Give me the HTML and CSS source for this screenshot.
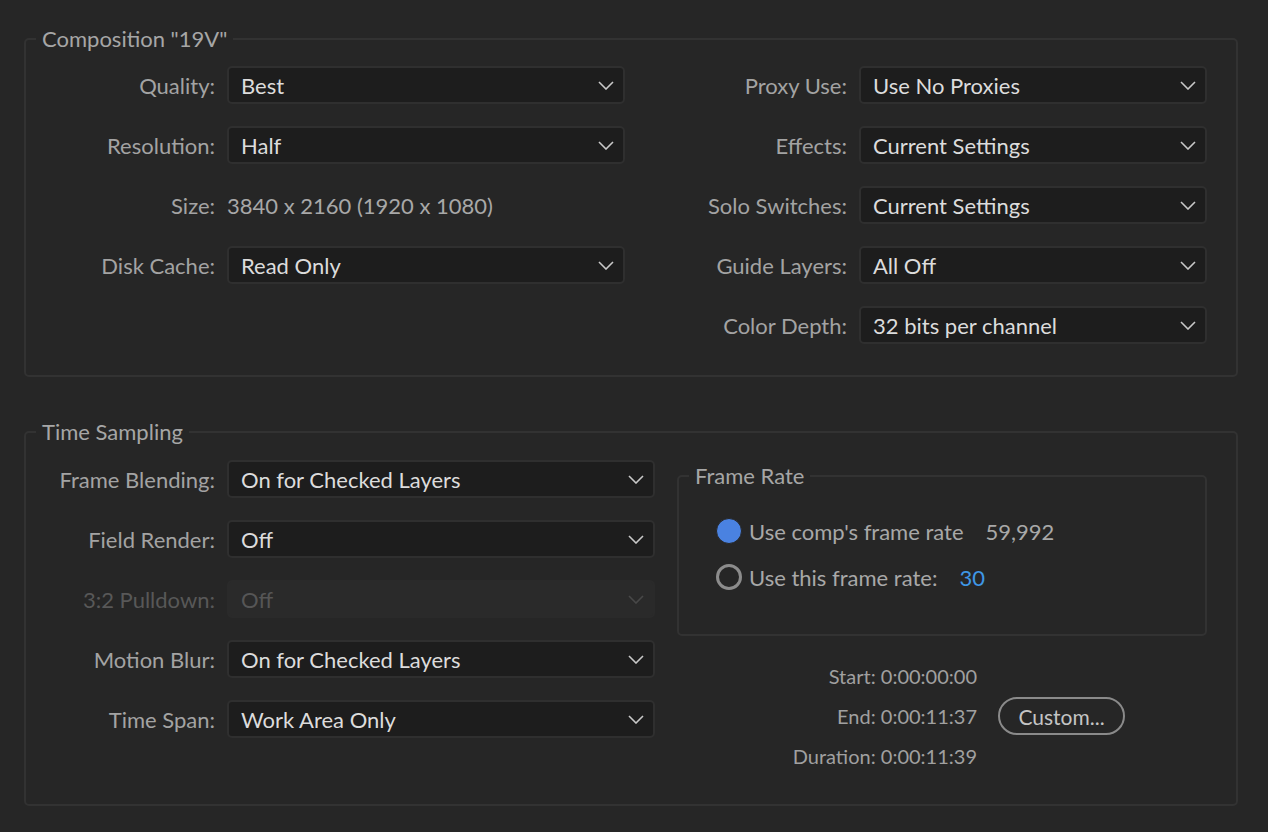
FILE: index.html
```html
<!DOCTYPE html>
<html>
<head>
<meta charset="utf-8">
<link rel="stylesheet" href="styles.css">
</head>
<body>
<div class="page">
  <section class="group comp">
    <div class="group-title">Composition "19V"</div>
    <div class="comp-body">
      <div class="grid grid-left">
        <div class="label">Quality:</div>
        <div class="dd"><span>Best</span><svg class="chev" viewBox="0 0 16 9"><path d="M1 1l7 7 7-7"/></svg></div>
        <div class="label">Resolution:</div>
        <div class="dd"><span>Half</span><svg class="chev" viewBox="0 0 16 9"><path d="M1 1l7 7 7-7"/></svg></div>
        <div class="label">Size:</div>
        <div class="plain">3840 x 2160 (1920 x 1080)</div>
        <div class="label">Disk Cache:</div>
        <div class="dd"><span>Read Only</span><svg class="chev" viewBox="0 0 16 9"><path d="M1 1l7 7 7-7"/></svg></div>
      </div>
      <div class="grid grid-right">
        <div class="label">Proxy Use:</div>
        <div class="dd"><span>Use No Proxies</span><svg class="chev" viewBox="0 0 16 9"><path d="M1 1l7 7 7-7"/></svg></div>
        <div class="label">Effects:</div>
        <div class="dd"><span>Current Settings</span><svg class="chev" viewBox="0 0 16 9"><path d="M1 1l7 7 7-7"/></svg></div>
        <div class="label">Solo Switches:</div>
        <div class="dd"><span>Current Settings</span><svg class="chev" viewBox="0 0 16 9"><path d="M1 1l7 7 7-7"/></svg></div>
        <div class="label">Guide Layers:</div>
        <div class="dd"><span>All Off</span><svg class="chev" viewBox="0 0 16 9"><path d="M1 1l7 7 7-7"/></svg></div>
        <div class="label">Color Depth:</div>
        <div class="dd"><span>32 bits per channel</span><svg class="chev" viewBox="0 0 16 9"><path d="M1 1l7 7 7-7"/></svg></div>
      </div>
    </div>
  </section>

  <section class="group time">
    <div class="group-title">Time Sampling</div>
    <div class="time-body">
      <div class="grid grid-time">
        <div class="label">Frame Blending:</div>
        <div class="dd"><span>On for Checked Layers</span><svg class="chev" viewBox="0 0 16 9"><path d="M1 1l7 7 7-7"/></svg></div>
        <div class="label">Field Render:</div>
        <div class="dd"><span>Off</span><svg class="chev" viewBox="0 0 16 9"><path d="M1 1l7 7 7-7"/></svg></div>
        <div class="label disabled">3:2 Pulldown:</div>
        <div class="dd disabled"><span>Off</span><svg class="chev" viewBox="0 0 16 9"><path d="M1 1l7 7 7-7"/></svg></div>
        <div class="label">Motion Blur:</div>
        <div class="dd"><span>On for Checked Layers</span><svg class="chev" viewBox="0 0 16 9"><path d="M1 1l7 7 7-7"/></svg></div>
        <div class="label">Time Span:</div>
        <div class="dd"><span>Work Area Only</span><svg class="chev" viewBox="0 0 16 9"><path d="M1 1l7 7 7-7"/></svg></div>
      </div>
      <div class="time-right">
        <section class="group rate">
          <div class="group-title">Frame Rate</div>
          <div class="rate-body">
            <div class="radio-row">
              <span class="radio checked"></span>
              <span class="radio-label">Use comp's frame rate</span>
              <span class="rate-val">59,992</span>
            </div>
            <div class="radio-row">
              <span class="radio"></span>
              <span class="radio-label">Use this frame rate:</span>
              <span class="rate-val link">30</span>
            </div>
          </div>
        </section>
        <div class="span-info">
          <div class="info">Start: 0:00:00:00</div>
          <div></div>
          <div class="info">End: 0:00:11:37</div>
          <button class="custom">Custom...</button>
          <div class="info">Duration: 0:00:11:39</div>
          <div></div>
        </div>
      </div>
    </div>
  </section>
</div>
</body>
</html>
```

FILE: styles.css
```css
* { box-sizing: border-box; }
html, body { margin: 0; padding: 0; }
body {
  background: #262626;
  font-family: Lato, "Open Sans", sans-serif;
  font-size: 22px;
  color: #a3a3a3;
  width: 1268px;
  height: 832px;
  overflow: hidden;
}
.page {
  padding: 38px 30px 0 24px;
  display: flex;
  flex-direction: column;
  gap: 54px;
}
.group {
  border: 2px solid #323232;
  border-radius: 5px;
}
.group-title {
  margin: -13px 0 0 10px;
  padding: 0 6px;
  width: fit-content;
  background: #262626;
  line-height: 24px;
  color: #a6a6a6;
}
.comp-body {
  display: flex;
  padding: 15px 0 31px 0;
}
.grid {
  display: grid;
  grid-auto-rows: 38px;
  row-gap: 22px;
  column-gap: 12px;
  align-items: center;
}
.grid-left { grid-template-columns: 189px 398px; }
.grid-right { grid-template-columns: 210px 348px; margin-left: 12px; }
.grid-time { grid-template-columns: 189px 428px; align-self: flex-start; }
.label {
  text-align: right;
  color: #a3a3a3;
  white-space: nowrap;
}
.label.disabled { color: #585858; }
.plain { color: #a8a8a8; }
.dd {
  height: 38px;
  background: #1d1d1d;
  border: 2px solid #2f2f2f;
  border-radius: 5px;
  display: flex;
  align-items: center;
  justify-content: space-between;
  padding: 0 9px 0 12px;
  color: #dcdcdc;
}
.dd.disabled {
  background: #2a2a2a;
  border-color: #2a2a2a;
  color: #565656;
}
.chev {
  width: 16px;
  height: 9px;
  fill: none;
  stroke: #c8c8c8;
  stroke-width: 1.6;
}
.dd.disabled .chev { stroke: #484848; }
.time-body {
  display: flex;
  padding: 16px 0 0 0;
  height: 360px;
}
.time-right {
  margin-left: 22px;
  margin-top: 15px;
  width: 530px;
  display: flex;
  flex-direction: column;
}
.rate-body {
  padding: 31px 0 45px 37px;
  display: flex;
  flex-direction: column;
  gap: 22px;
}
.radio-row {
  display: flex;
  align-items: center;
  height: 24px;
}
.radio {
  width: 26px;
  height: 26px;
  border-radius: 50%;
  border: 3.5px solid #8c8c8c;
  flex: none;
}
.radio.checked {
  border: 1px solid #262626;
  background: #4a82e1;
}
.radio-label { margin-left: 7px; color: #a8a8a8; }
.rate-val { margin-left: 22px; color: #a8a8a8; }
.rate-val.link { color: #3f97e6; }
.span-info {
  margin-top: 28px;
  display: grid;
  grid-template-columns: 300px 127px;
  column-gap: 21px;
  grid-auto-rows: 24px;
  row-gap: 16px;
  align-items: center;
}
.info {
  text-align: right;
  font-size: 20px;
  color: #a0a0a0;
  white-space: nowrap;
}
.custom {
  height: 38px;
  width: 127px;
  align-self: center;
  border: 2px solid #8a8a8a;
  border-radius: 19px;
  background: transparent;
  color: #c4c4c4;
  font-family: inherit;
  font-size: 21px;
  padding: 0;
}
```
